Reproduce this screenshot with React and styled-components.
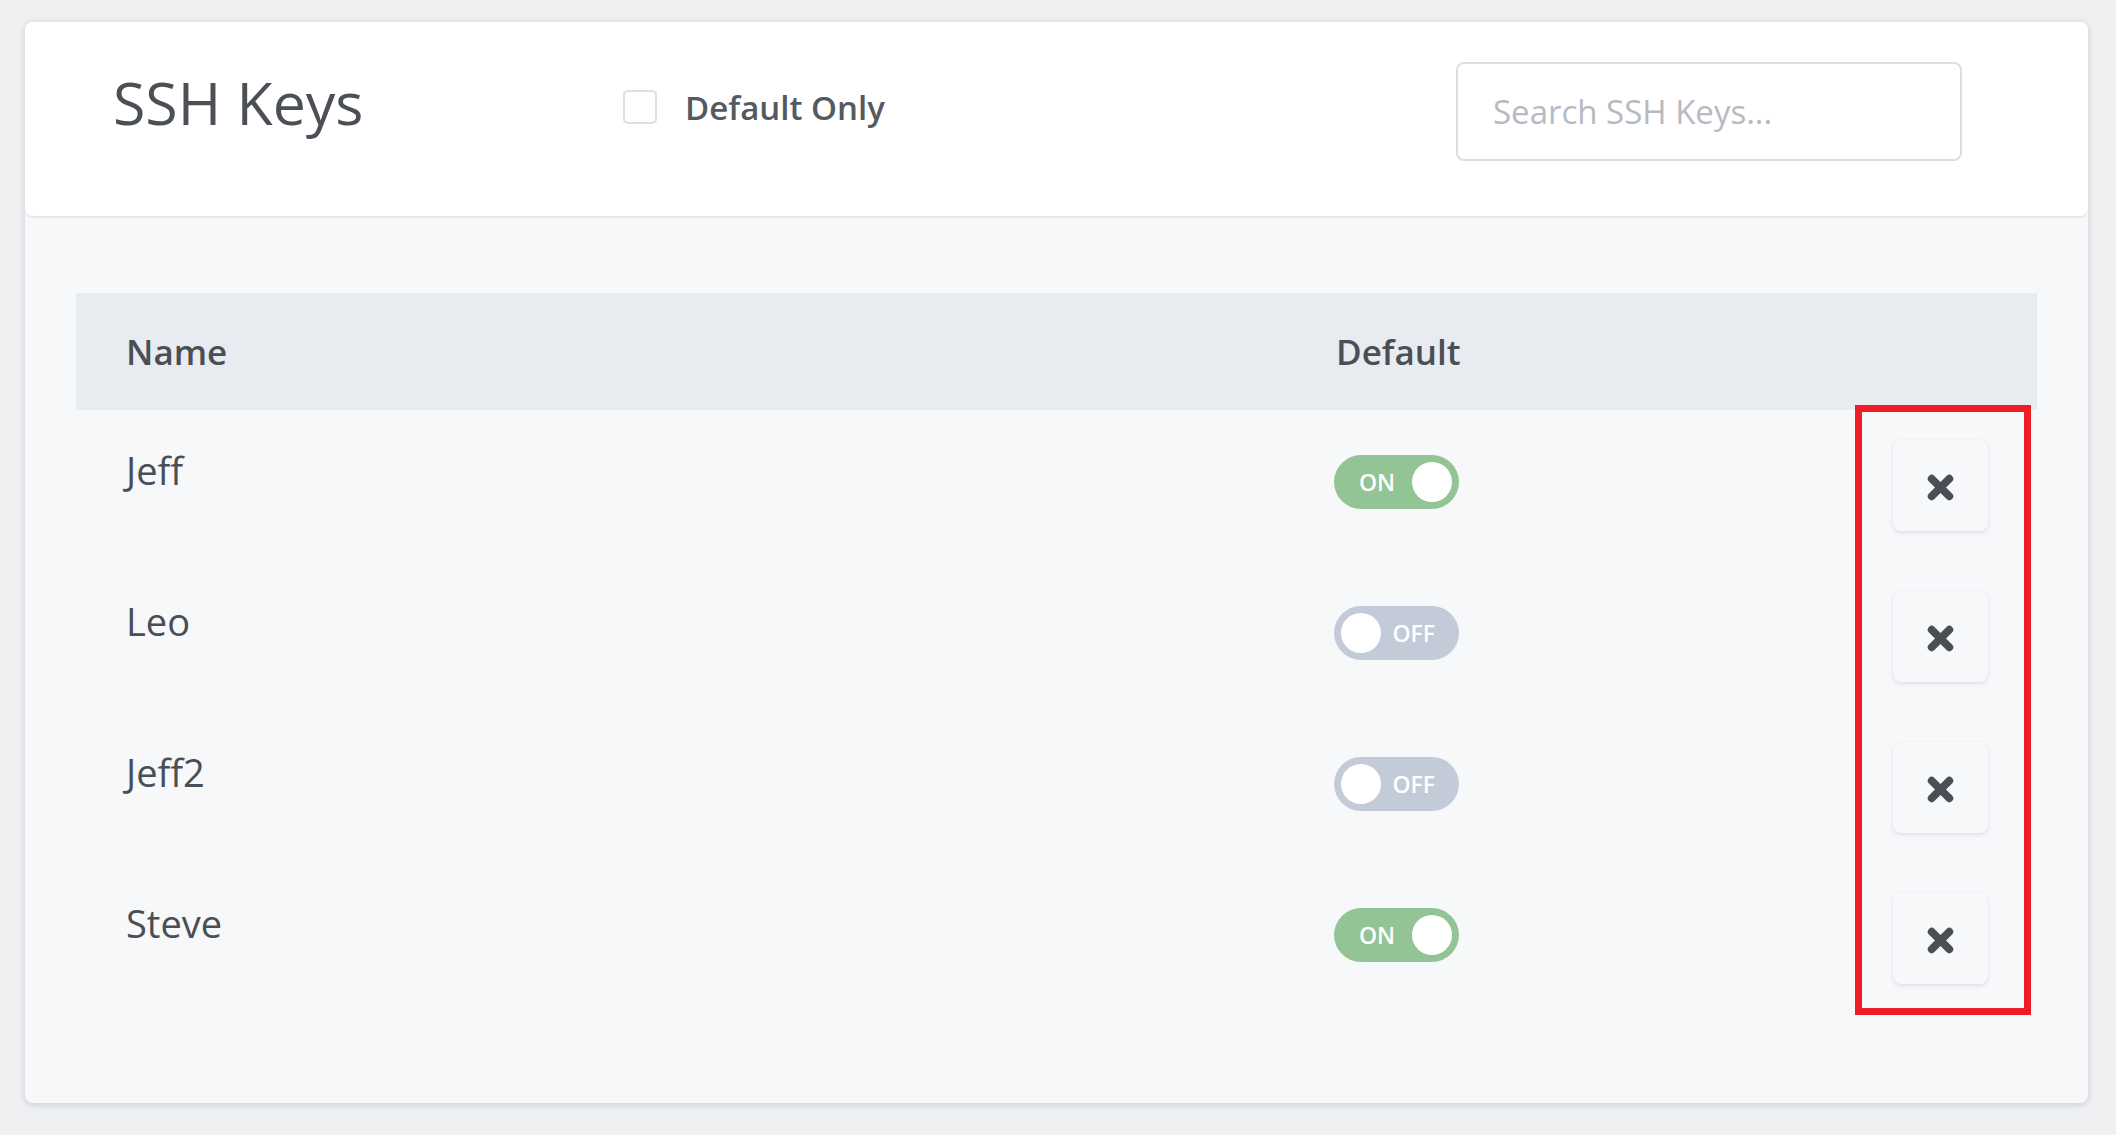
import React, { useState } from "react";
import styled, { createGlobalStyle } from "styled-components";

const GlobalStyle = createGlobalStyle`
  * { box-sizing: border-box; }
  body {
    margin: 0;
    background: #eff0f2;
    font-family: "Open Sans", "Noto Sans", sans-serif;
    color: #4a4f55;
  }
`;

const Page = styled.div`
  padding: 22px 28px 30px 25px;
  min-height: 100vh;
`;

const Card = styled.section`
  background: #f7f8fa;
  border-radius: 8px;
  box-shadow: 0 2px 6px rgba(40, 50, 70, 0.12), 0 0 10px rgba(40, 50, 70, 0.06);
  padding-bottom: 89px;
`;

const Header = styled.header`
  display: grid;
  grid-template-columns: 510px 1fr 506px;
  align-items: start;
  background: #fff;
  border-radius: 8px;
  box-shadow: 0 2px 0 #e4e7ec;
  padding: 40px 126px 53px 88px;
  height: 194px;
`;

const Title = styled.h1`
  margin: 3px 0 0;
  font-size: 59px;
  line-height: 74px;
  font-weight: 400;
  color: #4b5056;
  white-space: nowrap;
`;

const CheckLabel = styled.label`
  display: flex;
  align-items: center;
  gap: 28px;
  margin-top: 28px;
  height: 34px;
  font-size: 33px;
  font-weight: 600;
  color: #555a60;
  cursor: pointer;
`;

const CheckBox = styled.span`
  width: 34px;
  height: 34px;
  border: 2px solid #dcdee4;
  border-radius: 5px;
  background: #fff;
  flex: none;
`;

const Search = styled.input`
  width: 506px;
  height: 99px;
  border: 2px solid #dcdee4;
  border-radius: 8px;
  padding: 0 35px;
  font-family: inherit;
  font-size: 33px;
  color: #4a4f55;
  outline: none;
  &::placeholder {
    color: #b6bac2;
  }
`;

const Table = styled.div`
  position: relative;
  margin: 77px 51px 0 51px;
`;

const Row = styled.div`
  display: grid;
  grid-template-columns: 1210px 1fr 95px;
  padding: ${(p) => (p.$head ? "0 49px 0 50px" : "30px 49px 30px 50px")};
  height: ${(p) => (p.$head ? "117px" : "151px")};
  align-items: ${(p) => (p.$head ? "center" : "start")};
  background: ${(p) => (p.$head ? "#e8ebf0" : "transparent")};
`;

const HeadCell = styled.div`
  font-size: 35px;
  font-weight: 600;
  color: #4a4f55;
`;

const NameCell = styled.div`
  font-size: 38px;
  line-height: 54px;
  margin-top: 3px;
  color: #4a4f55;
`;

const Toggle = styled.button`
  display: flex;
  align-items: center;
  flex-direction: ${(p) => (p.$on ? "row" : "row-reverse")};
  justify-content: space-between;
  width: 125px;
  height: 54px;
  margin: 15px 0 0 -2px;
  padding: 0 7px 0 ${(p) => (p.$on ? "25px" : "7px")};
  padding-right: ${(p) => (p.$on ? "7px" : "24px")};
  border: none;
  border-radius: 27px;
  background: ${(p) => (p.$on ? "#93c495" : "#c3cad8")};
  color: #fff;
  font-family: inherit;
  font-size: 23px;
  font-weight: 600;
  cursor: pointer;
`;

const Knob = styled.span`
  width: 40px;
  height: 40px;
  border-radius: 50%;
  background: #fff;
`;

const DeleteButton = styled.button`
  display: flex;
  align-items: center;
  justify-content: center;
  width: 95px;
  height: 91px;
  border: none;
  border-radius: 8px;
  background: #f7f8fa;
  box-shadow: 0 2px 4px rgba(40, 50, 70, 0.1), 0 0 2px rgba(40, 50, 70, 0.05);
  cursor: pointer;
  padding: 0;
  padding-top: 3px;
`;

const Highlight = styled.div`
  position: absolute;
  left: 1779px;
  top: 112px;
  width: 176px;
  height: 610px;
  border: 7px solid #ee1d25;
  pointer-events: none;
`;

function TimesIcon() {
  return (
    <svg width="27" height="27" viewBox="0 0 26 26">
      <path
        d="M4.5 4.5 L21.5 21.5 M21.5 4.5 L4.5 21.5"
        stroke="#4a4f55"
        strokeWidth="7.5"
        strokeLinecap="round"
      />
    </svg>
  );
}

const initialKeys = [
  { name: "Jeff", isDefault: true },
  { name: "Leo", isDefault: false },
  { name: "Jeff2", isDefault: false },
  { name: "Steve", isDefault: true },
];

export default function App() {
  const [keys, setKeys] = useState(initialKeys);

  const toggle = (i) =>
    setKeys((ks) => ks.map((k, j) => (j === i ? { ...k, isDefault: !k.isDefault } : k)));

  return (
    <Page>
      <GlobalStyle />
      <Card>
        <Header>
          <Title>SSH Keys</Title>
          <CheckLabel>
            <CheckBox />
            Default Only
          </CheckLabel>
          <Search placeholder="Search SSH Keys..." />
        </Header>
        <Table>
          <Row $head>
            <HeadCell>Name</HeadCell>
            <HeadCell>Default</HeadCell>
            <div />
          </Row>
          {keys.map((k, i) => (
            <Row key={k.name}>
              <NameCell>{k.name}</NameCell>
              <div>
                <Toggle $on={k.isDefault} onClick={() => toggle(i)}>
                  {k.isDefault ? "ON" : "OFF"}
                  <Knob />
                </Toggle>
              </div>
              <DeleteButton aria-label="Delete">
                <TimesIcon />
              </DeleteButton>
            </Row>
          ))}
          <Highlight />
        </Table>
      </Card>
    </Page>
  );
}
